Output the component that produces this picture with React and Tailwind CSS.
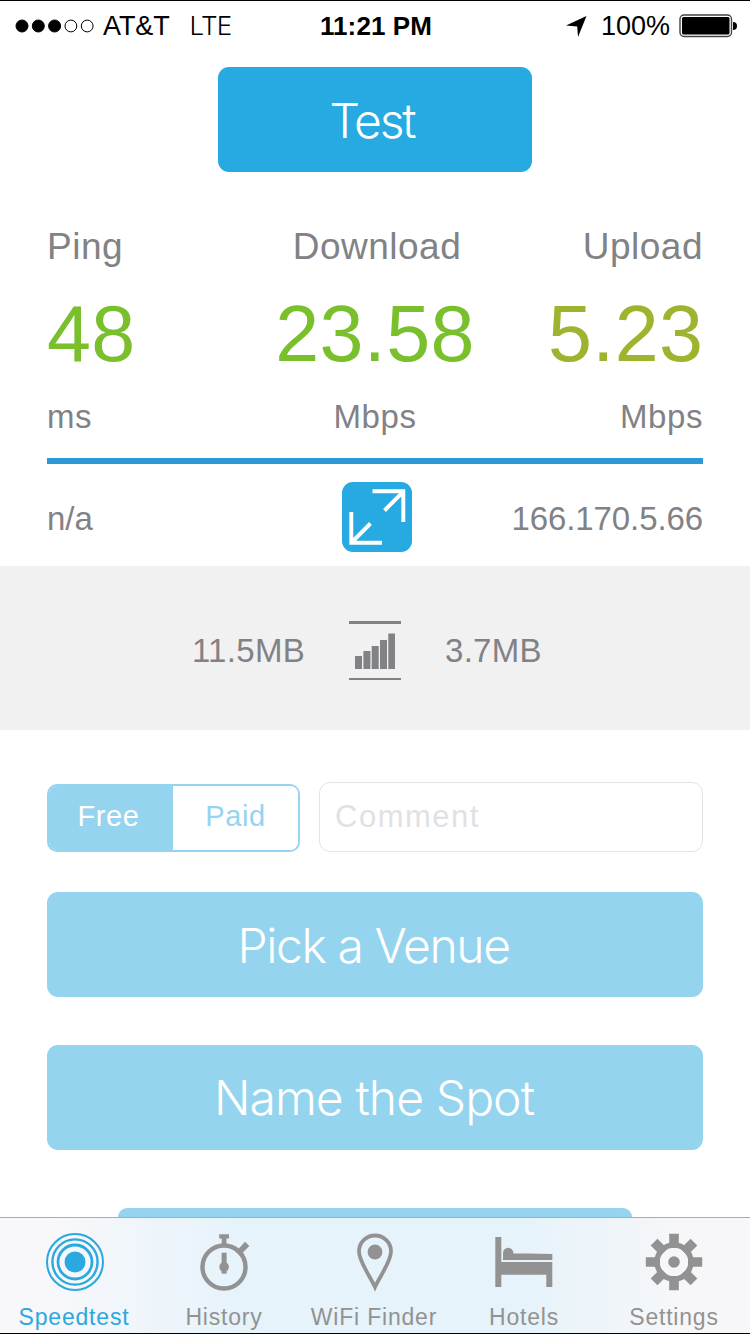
import React, { useState } from 'react';

const stats = [
  { label: 'Ping', value: '48', unit: 'ms', color: 'text-[#7abf2c]', align: 'text-left' },
  { label: 'Download', value: '23.58', unit: 'Mbps', color: 'text-[#7abf2c]', align: 'text-center' },
  { label: 'Upload', value: '5.23', unit: 'Mbps', color: 'text-[#9db52e]', align: 'text-right' },
];

const SpeedtestIcon = () => (
  <svg viewBox="0 0 60 60" className="w-[60px] h-[60px]" fill="none" stroke="currentColor">
    <circle cx="30" cy="30" r="28" strokeWidth="2" />
    <circle cx="30" cy="30" r="22.6" strokeWidth="2.4" />
    <circle cx="30" cy="30" r="17" strokeWidth="2.8" />
    <circle cx="30" cy="30" r="10.5" fill="currentColor" stroke="none" />
  </svg>
);

const HistoryIcon = () => (
  <svg viewBox="0 0 60 60" className="w-[60px] h-[60px] mr-[2px]" fill="currentColor">
    <circle cx="30" cy="35" r="21.5" fill="none" stroke="currentColor" strokeWidth="4.4" />
    <path d="M25.2 2.2h9.800v4.200h-2.500V13h-4.800V6.400h-2.500z" />
    <path d="M51 9.700l4.300 4.300-6.600 6.700 1 1-3 3-6-6 3-3 1 1z" />
    <path d="M27.600 20.700h5v21h-5z" />
    <circle cx="30.100" cy="35" r="4.800" />
  </svg>
);

const FinderIcon = () => (
  <svg viewBox="0 0 60 60" className="w-[60px] h-[60px]">
    <path
      d="M30 55C25.500 45 14 29.500 14 19.500a16 16 0 0 1 32 0C46 29.500 34.500 45 30 55z"
      fill="none"
      stroke="currentColor"
      strokeWidth="3.8"
    />
    <circle cx="30" cy="20" r="7.400" fill="currentColor" />
  </svg>
);

const HotelsIcon = () => (
  <svg viewBox="0 0 60 60" className="w-[60px] h-[60px] mr-[2px]" fill="currentColor">
    <path d="M1.300 5h6v25h51v25h-6V42.700h-45V55h-6z" />
    <path d="M9 21.500h24l25.300.5v6H9z" />
    <circle cx="14.200" cy="21" r="5.200" />
  </svg>
);

const SettingsIcon = () => (
  <svg viewBox="0 0 60 60" className="w-[60px] h-[60px] mr-[2px]" fill="currentColor">
    {[0, 45, 90, 135].map((angle) => (
      <path
        key={angle}
        d="M25.200 1.800h9.600V16h-9.600zM25.200 44h9.600v14.200h-9.600z"
        transform={`rotate(${angle} 30 30)`}
      />
    ))}
    <circle cx="30" cy="30" r="17" fill="none" stroke="currentColor" strokeWidth="5.500" />
    <circle cx="30" cy="30" r="5.800" />
  </svg>
);

const tabs = [
  { name: 'Speedtest', icon: SpeedtestIcon },
  { name: 'History', icon: HistoryIcon },
  { name: 'WiFi Finder', icon: FinderIcon },
  { name: 'Hotels', icon: HotelsIcon },
  { name: 'Settings', icon: SettingsIcon },
];

const StatusBar = () => (
  <div className="h-[50px] grid grid-cols-3 items-center pl-[15px] pr-[13px] text-[27px] text-black">
    <div className="flex items-center">
      <svg viewBox="0 0 80 14" className="w-[80px] h-[14px] mr-2" stroke="black">
        <circle cx="7" cy="7" r="6" fill="black" />
        <circle cx="23.300" cy="7" r="6" fill="black" />
        <circle cx="39.600" cy="7" r="6" fill="black" />
        <circle cx="55.900" cy="7" r="5.900" fill="none" />
        <circle cx="72.200" cy="7" r="5.900" fill="none" />
      </svg>
      <span className="tracking-[-0.1px]">AT&amp;T</span>
      <span className="ml-5 mb-[2px] font-[Inter] font-light text-[26px] tracking-[-0.8px]">LTE</span>
    </div>
    <div className="text-center font-bold text-[26px] tracking-[0.1px]">11:21 PM</div>
    <div className="flex items-center justify-end">
      <svg viewBox="0 0 21 21" className="w-[21px] h-[21px] mr-[14px]">
        <path d="M20.500 0L12 21l-.8-10.600L0 9.500z" />
      </svg>
      <span>100%</span>
      <svg viewBox="0 0 58 24" className="w-[58px] h-[24px] ml-[9px]">
        <rect x="1" y="1" width="51.500" height="21.500" rx="4" fill="none" stroke="#444" strokeWidth="1.400" />
        <rect x="3" y="3" width="47.500" height="17.500" rx="1.500" />
        <path d="M54 8a4 4 0 0 1 0 8z" />
      </svg>
    </div>
  </div>
);

const App = () => {
  const [access, setAccess] = useState('Free');
  const [activeTab, setActiveTab] = useState('Speedtest');

  return (
    <div className="w-[750px] h-[1334px] flex flex-col bg-white overflow-hidden border-y border-black text-[#818286] font-['Liberation_Sans',Arial,sans-serif]">
      <StatusBar />

      <button className="w-[314px] h-[105px] mt-4 mx-auto pt-[3px] pr-[6px] shrink-0 rounded-[11px] bg-[#27aae2] text-white font-[Inter] font-light text-[48px] tracking-[-2.2px]">
        Test
      </button>

      {/* Results */}
      <div className="mt-[51px] mx-[47px] grid grid-cols-[155px_1fr_155px]">
        {stats.map((stat) => (
          <div key={stat.label} className={stat.align}>
            <div className="h-12 leading-[48px] text-[37px] tracking-[0.5px]">
              <span className={stat.align === 'text-center' ? 'pl-1' : ''}>{stat.label}</span>
            </div>
            <div className={`h-[124px] leading-[126px] text-[79px] tracking-[0.4px] ${stat.color}`}>{stat.value}</div>
            <div className="h-11 leading-[43px] text-[33px] tracking-[0.6px]">{stat.unit}</div>
          </div>
        ))}
      </div>
      <div className="h-[6px] mt-[19px] mx-[47px] shrink-0 bg-[#2b9ad6]" />

      <div className="h-[70px] mt-[18px] mx-[47px] shrink-0 grid grid-cols-[295px_70px_1fr] items-center text-[33px]">
        <span className="pt-[3px]">n/a</span>
        <button className="w-[70px] h-[70px] rounded-[11px] bg-[#27aae2]">
          <svg viewBox="0 0 70 70" className="w-full h-full" fill="none" stroke="white" strokeWidth="3.900">
            <path d="M30.500 9.300h30.800V40M61 10L42.500 28.500M9.300 30v30.800H40M9.500 60.500L28.500 41.500" />
          </svg>
        </button>
        <span className="pt-[3px] text-right tracking-[-0.1px]">166.170.5.66</span>
      </div>

      {/* Data usage */}
      <div className="h-[164px] mt-[14px] shrink-0 bg-[#f1f1f1] grid grid-cols-[1fr_52px_1fr] gap-x-[44px] items-center text-[33px]">
        <span className="pt-[6px] text-right tracking-[0.3px]">11.5MB</span>
        <div className="h-[59px] mt-[5px] flex items-center justify-center border-t-[3px] border-b-2 border-[#818286]">
          <svg viewBox="0 0 40 37" className="w-[40px] h-[37px]" fill="currentColor">
            <path d="M0 23h7v13H0zM8.400 18h7v18h-7zM16.700 13h7v23h-7zM25 7h7v29h-7zM33.300 .5h6.700V36h-6.700z" />
          </svg>
        </div>
        <span className="pt-[6px] tracking-[0.3px]">3.7MB</span>
      </div>

      {/* Spot details */}
      <div className="mt-[52px] mx-[47px] shrink-0 flex items-end gap-[19px]">
        <div className="w-[253px] h-[68px] flex rounded-[10px] border-2 border-[#94d4ef] overflow-hidden text-[29px] tracking-[0.6px]">
          {['Free', 'Paid'].map((option) => (
            <button
              key={option}
              onClick={() => setAccess(option)}
              className={`first:w-[124px] last:w-[125px] pb-[2px] first:pr-[5px] ${access === option ? 'bg-[#94d4ef] text-white' : 'bg-white text-[#94d4ef]'}`}
            >
              {option}
            </button>
          ))}
        </div>
        <input
          placeholder="Comment"
          className="w-[384px] h-[70px] px-[15px] rounded-[11px] border border-[#e4e4e7] text-[31px] tracking-[1.5px] placeholder:text-[#e1e1e5] outline-none"
        />
      </div>

      <button className="h-[105px] mt-10 mx-[47px] pt-[3px] pr-[3px] shrink-0 rounded-[11px] bg-[#94d4ef] text-white font-[Inter] font-light text-[48px] tracking-[-1.4px]">
        Pick a Venue
      </button>
      <button className="h-[105px] mt-[48px] mx-[47px] pr-[2px] shrink-0 rounded-[11px] bg-[#94d4ef] text-white font-[Inter] font-light text-[48px] tracking-[-0.9px]">
        Name the Spot
      </button>
      <div className="w-[514px] h-[9px] mt-[58px] mx-auto shrink-0 rounded-t-[11px] bg-[#94d4ef]" />

      {/* Tab bar */}
      <div className="h-[116px] shrink-0 grid grid-cols-5 border-t border-[#a5adb3] bg-[linear-gradient(90deg,#f8f8fa_6%,#e6f3fa_32%,#e6f3fa_70%,#f7f7f9_92%)]">
        {tabs.map(({ name, icon: Icon }) => (
          <button
            key={name}
            onClick={() => setActiveTab(name)}
            className={`pt-[14px] flex flex-col items-center text-[23px] leading-[28px] tracking-[0.8px] ${activeTab === name ? 'text-[#2ba8df]' : 'text-[#929292]'}`}
          >
            <Icon />
            <span className="mt-[11px] pr-[2px] whitespace-nowrap">{name}</span>
          </button>
        ))}
      </div>
    </div>
  );
};

export default App;
